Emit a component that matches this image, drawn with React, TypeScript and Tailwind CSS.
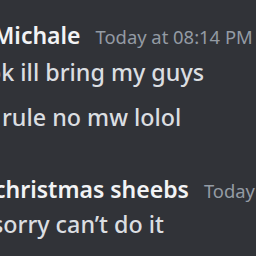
export default function App() {
  return (
    <div
      className="h-[256px] w-[256px] overflow-hidden bg-[#313338] pt-[20px]"
      style={{ fontFamily: '"Noto Sans", "Open Sans", sans-serif' }}
    >
      {/* First message group */}
      <div className="whitespace-nowrap">
        <div className="ml-[-7px] flex items-baseline gap-[15px] leading-[30px]">
          <span className="text-[23px] font-semibold text-[#f2f3f5]">Michale</span>
          <span className="text-[18.4px] text-[#949ba4]">Today at 08:14 PM</span>
        </div>
        <p className="ml-[-13px] mt-[4px] text-[23.3px] font-medium leading-[32px] text-[#dbdee1]">ok ill bring my guys</p>
      </div>
      <p className="ml-[2px] mt-[13px] whitespace-nowrap text-[23.3px] font-medium leading-[32px] text-[#dbdee1]">
        rule no mw lolol
      </p>

      {/* Second message group */}
      <div className="mt-[41px] whitespace-nowrap">
        <div className="ml-[-6px] flex items-baseline gap-[15px] leading-[30px]">
          <span className="text-[23px] font-semibold text-[#f2f3f5]">christmas sheebs</span>
          <span className="text-[18.4px] text-[#949ba4]">Today at 08:15 PM</span>
        </div>
        <p className="ml-[-8px] mt-[2px] text-[23.3px] font-medium leading-[32px] text-[#dbdee1]">sorry can’t do it</p>
      </div>
    </div>
  );
}
